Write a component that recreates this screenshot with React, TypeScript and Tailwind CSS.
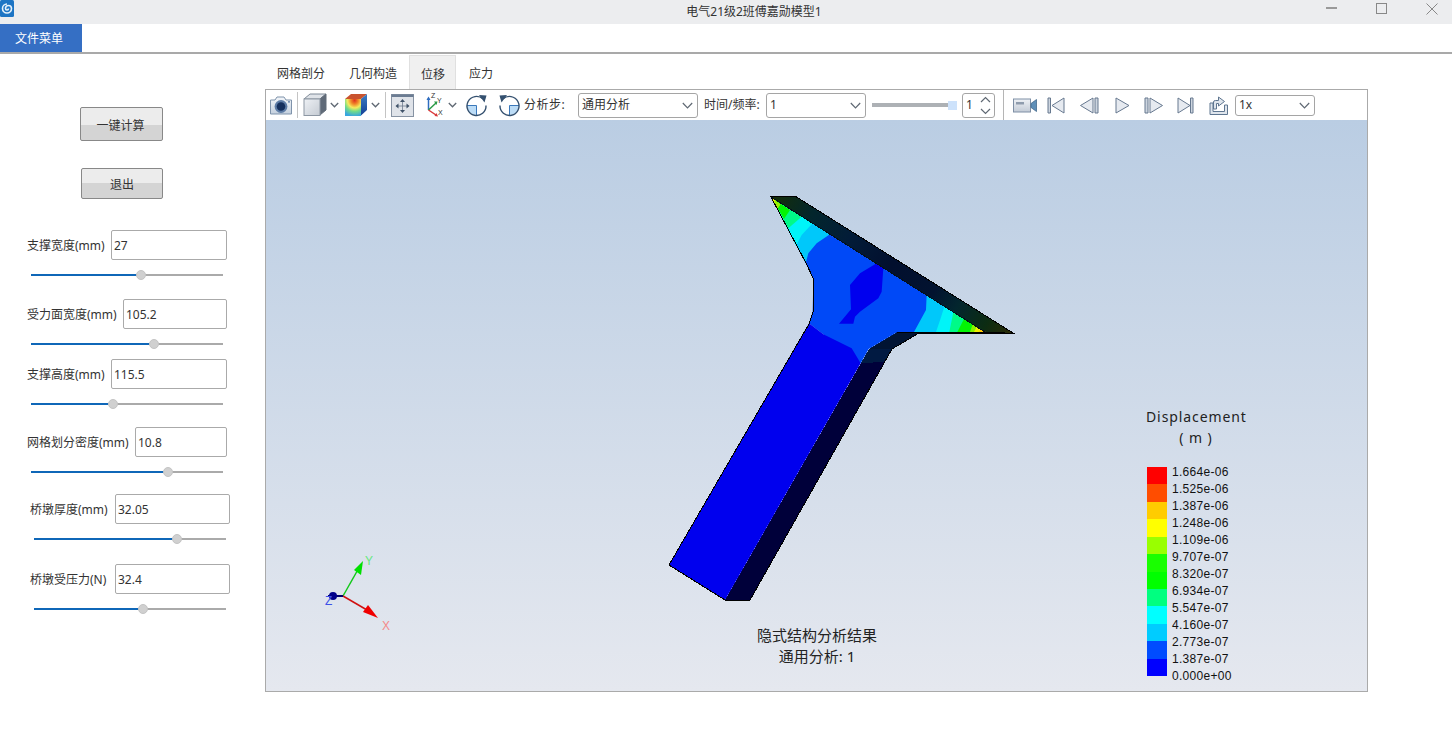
import React from "react";

const FONT = "font-['Noto_Sans','Noto_Sans_CJK_SC',sans-serif]";

function Chevron({ className = "" }: { className?: string }) {
  return (
    <svg width="9" height="6" viewBox="0 0 9 6" className={className}>
      <path d="M0.8 1 L4.5 4.8 L8.2 1" fill="none" stroke="#5f6873" strokeWidth="1.3" />
    </svg>
  );
}

function Select({ value, className }: { value: string; className: string }) {
  return (
    <div className={`flex items-center justify-between border border-[#a5a5a5] rounded-[3px] bg-white pl-[3px] pr-[4px] text-[12px] text-[#333] ${className}`}>
      <span>{value}</span>
      <svg width="11" height="7" viewBox="0 0 11 7">
        <path d="M0.8 1 L5.5 5.8 L10.2 1" fill="none" stroke="#5f6873" strokeWidth="1.2" />
      </svg>
    </div>
  );
}

function CameraIcon() {
  return (
    <svg width="24" height="22" viewBox="0 0 24 22">
      <defs>
        <linearGradient id="cam" x1="0" y1="0" x2="0" y2="1">
          <stop offset="0" stopColor="#f3f6fa" />
          <stop offset="1" stopColor="#c4d0de" />
        </linearGradient>
      </defs>
      <path d="M1.5 6 H6 L8 3 H15 L17 6 H22.5 V20 H1.5 Z" fill="url(#cam)" stroke="#7f93ab" strokeWidth="1" />
      <circle cx="12" cy="12.5" r="6.4" fill="#5d7ca6" />
      <circle cx="12" cy="12.5" r="4.3" fill="#15305e" />
      <circle cx="20" cy="7.8" r="0.9" fill="#4d6f9a" />
    </svg>
  );
}

function CubeIcon() {
  return (
    <svg width="24" height="24" viewBox="0 0 24 24">
      <defs>
        <linearGradient id="cubeF" x1="0" y1="0" x2="1" y2="1">
          <stop offset="0" stopColor="#eef1f5" />
          <stop offset="1" stopColor="#c5cbd3" />
        </linearGradient>
      </defs>
      <path d="M1 6 L7 1 H23 L17 6 Z" fill="#dfe3e8" stroke="#7f8a97" strokeWidth="1" />
      <path d="M17 6 L23 1 V17 L17 22 Z" fill="#5f6a78" stroke="#636d79" strokeWidth="1" />
      <rect x="1" y="6" width="16" height="16.5" fill="url(#cubeF)" stroke="#8d97a3" strokeWidth="1" />
    </svg>
  );
}

function ColorCubeIcon() {
  return (
    <svg width="24" height="24" viewBox="0 0 24 24">
      <defs>
        <radialGradient id="heat" cx="0.6" cy="0.08" r="1.05">
          <stop offset="0" stopColor="#e0301e" />
          <stop offset="0.22" stopColor="#f08a2a" />
          <stop offset="0.42" stopColor="#f4ea5e" />
          <stop offset="0.62" stopColor="#72dc8a" />
          <stop offset="0.9" stopColor="#38a6e0" />
        </radialGradient>
        <linearGradient id="heatSide" x1="0" y1="0" x2="0" y2="1">
          <stop offset="0" stopColor="#3d7fc4" />
          <stop offset="1" stopColor="#123f96" />
        </linearGradient>
      </defs>
      <path d="M1 6 L7 1 H23 L17 6 Z" fill="#c9532e" />
      <path d="M17 6 L23 1 V17 L17 22.5 Z" fill="url(#heatSide)" />
      <rect x="1" y="6" width="16" height="17" fill="url(#heat)" />
    </svg>
  );
}

function FitIcon() {
  return (
    <svg width="23" height="23" viewBox="0 0 23 23">
      <rect x="0.5" y="0.5" width="22" height="22" fill="#dfe3e9" stroke="#8793a3" />
      <rect x="0.5" y="0.5" width="22" height="2.5" fill="#6b7c92" />
      <path d="M11.5 6 v12 M5.5 12 h12" stroke="#6d7b8e" strokeWidth="0.8" />
      <g fill="#3f5269">
        <path d="M11.5 5 L14 8 H9 Z" />
        <path d="M11.5 19 L14 16 H9 Z" />
        <path d="M4.5 12 L7.5 9.5 V14.5 Z" />
        <path d="M18.5 12 L15.5 9.5 V14.5 Z" />
      </g>
    </svg>
  );
}

function AxisIcon() {
  return (
    <svg width="24" height="26" viewBox="0 0 24 26">
      <path d="M6.5 18 V6" stroke="#2f6dc0" strokeWidth="1.5" />
      <path d="M6.5 18 L14 11" stroke="#2a9a46" strokeWidth="1.5" />
      <path d="M6.5 18 L14 23" stroke="#d8383a" strokeWidth="1.5" />
      <path d="M4.5 8 L6.5 4.5 L8.5 8 Z" fill="#2f6dc0" />
      <path d="M12 9.5 L15.5 9.5 L14.5 13 Z" fill="#2a9a46" />
      <path d="M12.5 24 L16 24.5 L14.5 21 Z" fill="#d8383a" />
      <text x="9" y="6" fontSize="7" fontFamily="Liberation Sans" fill="#333">Z</text>
      <text x="15" y="11" fontSize="7" fontFamily="Liberation Sans" fill="#333">Y</text>
      <text x="16" y="23" fontSize="7" fontFamily="Liberation Sans" fill="#333">X</text>
    </svg>
  );
}

function RotateIcon({ flip = false }: { flip?: boolean }) {
  return (
    <svg width="23" height="23" viewBox="0 0 23 23" className={flip ? "-scale-x-100" : ""}>
      <path d="M2 11.5 H11.5 V21 A9.5 9.5 0 0 1 2 11.5 Z" fill="#bcdcf6" />
      <path d="M11.5 11.5 V21 M2 11.5 H11.5" stroke="#3b78ba" strokeWidth="1" fill="none" />
      <path d="M18 5 A9.5 9.5 0 1 0 21 11.5" fill="none" stroke="#34506f" strokeWidth="1.4" />
      <path d="M14 1 L21.5 1.5 L19.5 8.5 Z" fill="#34506f" />
    </svg>
  );
}

function VideoIcon() {
  return (
    <svg width="24" height="15" viewBox="0 0 24 15">
      <defs>
        <linearGradient id="vid" x1="0" y1="0" x2="0" y2="1">
          <stop offset="0" stopColor="#eef1f5" />
          <stop offset="1" stopColor="#c3cbd6" />
        </linearGradient>
      </defs>
      <rect x="0.5" y="1" width="17" height="13" fill="url(#vid)" stroke="#7e8fa5" />
      <rect x="3" y="4" width="8" height="2.5" fill="#8f9cad" />
      <path d="M18 5.5 L23.5 1.5 V13.5 L18 9.5 Z" fill="#5f8fb8" stroke="#45698d" strokeWidth="0.8" />
    </svg>
  );
}

function MediaIcon({ d, bar, w }: { d: string; bar?: string; w: number }) {
  return (
    <svg width={w} height="17" viewBox={`0 0 ${w} 17`}>
      {bar && <path d={bar} fill="#cdd5df" stroke="#66788f" strokeWidth="1" />}
      <path d={d} fill="#e6eaf0" stroke="#66788f" strokeWidth="1" />
    </svg>
  );
}

function ExportIcon() {
  return (
    <svg width="19" height="19" viewBox="0 0 19 19">
      <path d="M1 7 H4 V15.5 H15.5 V9 H18.5 V18.5 H1 Z" fill="#dfe5ec" stroke="#5f7690" strokeWidth="1" />
      <path d="M4.5 13 V6 Q4.5 4.5 6.5 4.5 H9.5 V1 L15.5 5.5 L9.5 10 V7.5 H7.5 V13 Z" fill="#dfe5ec" stroke="#5f7690" strokeWidth="1" />
    </svg>
  );
}

function Sep({ className }: { className: string }) {
  return <div className={`w-px h-[26px] bg-[#c4c4c4] ${className}`} />;
}

const fields = [
  { label: "支撑宽度(mm)", value: "27", row: "mt-[31px] ml-[27px]", labelW: "w-[84px]", inputW: "w-[116px]", slider: "mt-[9px] ml-[31px]", pos: 110 },
  { label: "受力面宽度(mm)", value: "105.2", row: "mt-[18px] ml-[27px]", labelW: "w-[96px]", inputW: "w-[104px]", slider: "mt-[9px] ml-[31px]", pos: 123 },
  { label: "支撑高度(mm)", value: "115.5", row: "mt-[9px] ml-[27px]", labelW: "w-[84px]", inputW: "w-[116px]", slider: "mt-[9px] ml-[31px]", pos: 82 },
  { label: "网格划分密度(mm)", value: "10.8", row: "mt-[17px] ml-[27px]", labelW: "w-[108px]", inputW: "w-[92px]", slider: "mt-[9px] ml-[31px]", pos: 137 },
  { label: "桥墩厚度(mm)", value: "32.05", row: "mt-[16px] ml-[30px]", labelW: "w-[85px]", inputW: "w-[115px]", slider: "mt-[9px] ml-[34px]", pos: 143 },
  { label: "桥墩受压力(N)", value: "32.4", row: "mt-[19px] ml-[30px]", labelW: "w-[85px]", inputW: "w-[115px]", slider: "mt-[9px] ml-[34px]", pos: 109 },
];

function Field({ f }: { f: (typeof fields)[number] }) {
  return (
    <>
      <div className={`flex items-center h-[30px] ${f.row}`}>
        <div className={`${f.labelW} shrink-0 pt-[2px] text-[12px] text-[#333] whitespace-nowrap`}>{f.label}</div>
        <div className={`${f.inputW} h-[30px] border border-[#aaa] rounded-[2px] flex items-center pl-[2px] pt-[2px] text-[12px] text-[#333]`}>{f.value}</div>
      </div>
      <div className={`relative w-[192px] h-[12px] flex items-center ${f.slider}`}>
        <div className="h-[2px] bg-[#0f67b8]" style={{ width: f.pos }} />
        <div className="h-[2px] bg-[#aaaaaa] flex-1" />
        <div className="absolute top-px w-[10px] h-[10px] rounded-full bg-[#d0d0d0] border border-[#c4c4c4]" style={{ left: f.pos - 5 }} />
      </div>
    </>
  );
}

const legendColors = ["#ff0000", "#ff4d00", "#ffcc00", "#ffff00", "#99ff00", "#19ff00", "#00ff00", "#00ff80", "#00ffff", "#00ccff", "#004cff", "#0000ff"];
const legendLabels = ["1.664e-06", "1.525e-06", "1.387e-06", "1.248e-06", "1.109e-06", "9.707e-07", "8.320e-07", "6.934e-07", "5.547e-07", "4.160e-07", "2.773e-07", "1.387e-07", "0.000e+00"];

function Model() {
  return (
    <svg viewBox="266 120 1101 571" className="absolute inset-0 w-full h-full">
      <defs>
        <linearGradient id="band" gradientUnits="userSpaceOnUse" x1="770" y1="196" x2="1013" y2="333">
          <stop offset="0" stopColor="#162e06" />
          <stop offset="0.16" stopColor="#03262c" />
          <stop offset="0.32" stopColor="#021c38" />
          <stop offset="0.5" stopColor="#020f2e" />
          <stop offset="0.68" stopColor="#021330" />
          <stop offset="0.78" stopColor="#03262e" />
          <stop offset="0.9" stopColor="#0c2c12" />
          <stop offset="1" stopColor="#2c2a05" />
        </linearGradient>
      </defs>
      <g shapeRendering="crispEdges">
        <polygon points="725,600 750,600 892,349 919,333 897,332 869,349 861,363" fill="#00003a" />
        <polygon points="869,349 892,349 884,362 861,363" fill="#011a42" />
        <polygon points="897,332 919,332 892,349 869,349" fill="#011433" />
        <polygon points="770,196 795,196 1013,333 985,333" fill="url(#band)" />
      </g>
      <g transform="translate(660 185) scale(0.33333)">
        <polygon points="335,38 975,441 712,441 626,492 602,535 447,415 458,380 460,280 437,235" fill="#0049f7" />
        <polygon points="335,38 510,148 470,175 445,205 437,235" fill="#00c8fa" />
        <polygon points="335,38 458,115 425,150 408,182" fill="#00f4f8" />
        <polygon points="335,38 425,95 385,130" fill="#00fa88" />
        <polygon points="335,38 390,75 372,102" fill="#04f404" />
        <polygon points="335,38 362,58 352,72" fill="#99f000" />
        <polygon points="335,38 346,46 342,54" fill="#f0f000" />
        <polygon points="800,330 975,441 762,441 798,375" fill="#00c8fa" />
        <polygon points="853,365 975,441 828,441 842,400" fill="#00f4f8" />
        <polygon points="880,382 975,441 868,441" fill="#00fa88" />
        <polygon points="912,402 975,441 892,441" fill="#04f404" />
        <polygon points="938,418 975,441 930,441" fill="#88f000" />
        <polygon points="950,425 975,441 942,441" fill="#f0f000" />
        <polygon points="962,432 978,443 955,443" fill="#ffc800" />
        <polygon points="972,438 982,444 968,444" fill="#ff3000" />
        <polygon points="650,235 670,250 665,320 655,340 600,380 585,395 580,416 537,416 573,373 570,300 600,265" fill="#0000ee" />
        <polygon points="447,415 490,448 575,490 602,535 195,1245 27,1140" fill="#0000ee" />
      </g>
      <g fill="none" stroke="#000" strokeWidth="1" shapeRendering="crispEdges">
        <path d="M771,197 L806,263 L813,278 L813,312 L809,324 L669,565 L725,600 L750,600 L892,349 L919,333 L1013,333 L795,196 L770,196" />
        <path d="M771,197 L985,332" stroke="#041018" />
        <path d="M897,332 L1005,332" />
      </g>
      <g>
        <path d="M343,596 L360,566" stroke="#12c81a" strokeWidth="1.5" />
        <polygon points="363,561 361,575 354,570" fill="#00e000" />
        <path d="M343,596 L367,610" stroke="#d01010" strokeWidth="1.5" />
        <polygon points="378,618 363,612 368,605" fill="#f00000" />
        <path d="M343,596 L328,596" stroke="#00006e" strokeWidth="2" />
        <circle cx="333" cy="596" r="4" fill="#00008a" />
        <text x="365" y="565" fontSize="12" fontFamily="Liberation Sans" fill="#66e87e">Y</text>
        <text x="382" y="630" fontSize="12" fontFamily="Liberation Sans" fill="#f48a8a">X</text>
        <text x="325" y="605" fontSize="12" fontFamily="Liberation Sans" fill="#3c50e8">Z</text>
      </g>
    </svg>
  );
}

export default function App() {
  return (
    <div className={`w-[1452px] h-[732px] bg-white overflow-hidden flex flex-col ${FONT}`}>
      <div className="h-[24px] shrink-0 bg-[#ecedef] flex items-center">
        <svg width="14" height="17" viewBox="0 0 14 17" className="self-start shrink-0">
          <rect width="14" height="17" rx="1.5" fill="#1d75c4" />
          <path d="M7 4 A4.5 4.5 0 1 0 11.5 8.5 A3 3 0 1 0 5.5 8.5 A1.5 1.5 0 0 0 8.5 8.5" fill="none" stroke="#e4f1fb" strokeWidth="1.6" />
        </svg>
        <div className="flex-1 text-center pl-[184px] text-[12px] text-[#333]">电气21级2班傅嘉勋模型1</div>
        <div className="w-[142px] self-start pt-[3px] shrink-0 flex items-start pl-[16px]">
          <div className="mt-[4px] w-[11px] h-[2px] bg-[#999]" />
          <div className="ml-[39px] w-[11px] h-[11px] border border-[#888]" />
          <svg width="12" height="12" viewBox="0 0 12 12" className="ml-[39px]">
            <path d="M0.5 0.5 L11.5 11.5 M11.5 0.5 L0.5 11.5" stroke="#888" strokeWidth="1" />
          </svg>
        </div>
      </div>
      <div className="h-[30px] shrink-0 border-b-2 border-[#a9a9a9]">
        <div className="w-[82px] h-[28px] pr-[4px] pt-[2px] bg-[#356fc4] text-white text-[12px] flex items-center justify-center">文件菜单</div>
      </div>
      <div className="flex flex-1 min-h-0">
        <div className="w-[265px] shrink-0 flex flex-col">
          <div className="mt-[53px] ml-[80px] w-[83px] h-[34px] pt-[4px] pr-[2px] border border-[#888] rounded-[2px] bg-[linear-gradient(#ececec_53%,#d4d4d4_53%)] flex items-center justify-center text-[12px] text-[#333]">一键计算</div>
          <div className="mt-[27px] ml-[81px] w-[82px] h-[31px] pt-[2px] border border-[#888] rounded-[2px] bg-[linear-gradient(#ececec_50%,#d4d4d4_50%)] flex items-center justify-center text-[12px] text-[#333]">退出</div>
          {fields.map((f) => (
            <Field key={f.label} f={f} />
          ))}
        </div>
        <div className="flex flex-col">
          <div className="h-[35px] pt-[1px] flex text-[12px] text-[#333]">
            <div className="w-[72px] pt-[4px] flex items-center justify-center">网格剖分</div>
            <div className="w-[72px] pt-[4px] flex items-center justify-center">几何构造</div>
            <div className="w-[47px] pt-[4px] pl-[1px] flex items-center justify-center bg-[#f0f0f0] border-x border-t border-[#e0e0e0]">位移</div>
            <div className="w-[50px] pt-[4px] flex items-center justify-center">应力</div>
          </div>
          <div className="w-[1103px] h-[603px] border border-[#aaaaaa] flex flex-col">
            <div className="h-[30px] shrink-0 bg-white flex items-center text-[12px] text-[#333]">
              <div className="ml-[3px]"><CameraIcon /></div>
              <Sep className="ml-[4px]" />
              <div className="ml-[5px]"><CubeIcon /></div>
              <Chevron className="ml-[3px]" />
              <div className="ml-[5px]"><ColorCubeIcon /></div>
              <Chevron className="ml-[3px]" />
              <Sep className="ml-[5px]" />
              <div className="ml-[5px]"><FitIcon /></div>
              <div className="ml-[8px]"><AxisIcon /></div>
              <Chevron className="ml-[2px]" />
              <div className="ml-[8px]"><RotateIcon /></div>
              <div className="ml-[10px]"><RotateIcon flip /></div>
              <div className="ml-[3px] w-[54px] shrink-0 tracking-[0.5px]">分析步:</div>
              <Select value="通用分析" className="w-[120px] h-[25px]" />
              <div className="ml-[6px] w-[57px] shrink-0 whitespace-nowrap">时间/频率:</div>
              <Select value="1" className="ml-[5px] w-[100px] h-[25px]" />
              <div className="ml-[6px] w-[85px] h-[9px] flex items-center">
                <div className="flex-1 h-[4px] bg-[#adb1b5]" />
                <div className="w-[9px] h-[9px] bg-[#cde2fb]" />
              </div>
              <div className="ml-[5px] w-[33px] h-[25px] border border-[#a5a5a5] rounded-[3px] flex items-center justify-between pl-[3px] pr-[3px]">
                <span>1</span>
                <svg width="11" height="19" viewBox="0 0 11 19">
                  <path d="M1 6 L5.5 1.5 L10 6 M1 13 L5.5 17.5 L10 13" fill="none" stroke="#5f6873" strokeWidth="1.2" />
                </svg>
              </div>
              <div className="ml-[8px] w-px h-[30px] bg-[#b5b5b5]" />
              <div className="ml-[9px]"><VideoIcon /></div>
              <div className="ml-[10px]"><MediaIcon w={18} bar="M1 1 H3.5 V16 H1 Z" d="M17 1 V16 L5 8.5 Z" /></div>
              <div className="ml-[14px]"><MediaIcon w={20} bar="M16 1 H19 V16 H16 Z" d="M14 1 V16 L1.5 8.5 Z" /></div>
              <div className="ml-[16px]"><MediaIcon w={15} d="M1 1 V16 L14 8.5 Z" /></div>
              <div className="ml-[14px]"><MediaIcon w={20} bar="M1 1 H4 V16 H1 Z" d="M6 1 V16 L18.5 8.5 Z" /></div>
              <div className="ml-[13px]"><MediaIcon w={17} bar="M13.5 1 H16 V16 H13.5 Z" d="M1 1 V16 L13 8.5 Z" /></div>
              <div className="ml-[15px]"><ExportIcon /></div>
              <Select value="1x" className="ml-[7px] w-[80px] h-[21px]" />
            </div>
            <div className="relative flex-1 bg-[linear-gradient(#bacde3,#e5e8ef)]">
              <Model />
              <div className="absolute left-[491px] top-[505px] w-[120px] text-center text-[15px] leading-[21px] text-[#222]">
                <div>隐式结构分析结果</div>
                <div>通用分析: 1</div>
              </div>
              <div className="absolute left-[880px] top-[286px] w-[100px] text-center text-[14px] leading-[21px] tracking-[0.9px] text-[#222]">
                <div>Displacement</div>
                <div>( m )</div>
              </div>
              <div className="absolute left-[881px] top-[347px] w-[20px] h-[209px] flex flex-col">
                {legendColors.map((c) => (
                  <div key={c} className="flex-1" style={{ background: c }} />
                ))}
              </div>
              <div className="absolute left-[906px] top-[344px] flex flex-col text-[12px] leading-[17px] font-['Liberation_Sans',sans-serif] tracking-[0.3px] text-[#111]">
                {legendLabels.map((l, i) => (
                  <div key={i}>{l}</div>
                ))}
              </div>
            </div>
          </div>
        </div>
      </div>
    </div>
  );
}
